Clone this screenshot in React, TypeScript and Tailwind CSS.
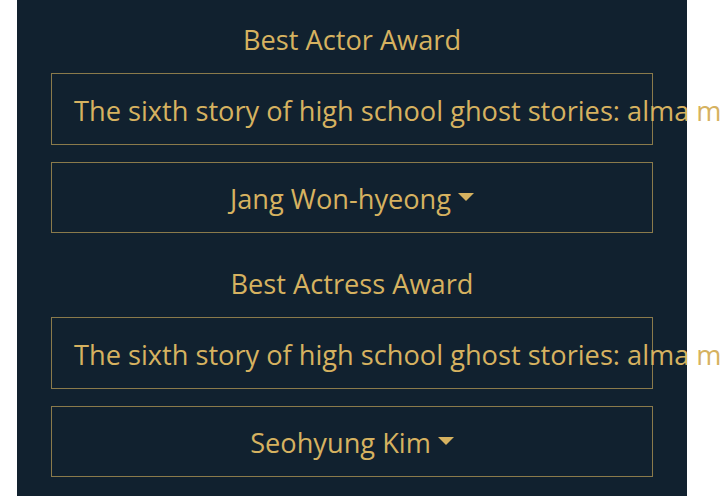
import React from 'react';

type Award = {
  title: string;
  film: string;
  nominee: string;
};

const awards: Award[] = [
  {
    title: 'Best Actor Award',
    film: 'The sixth story of high school ghost stories: alma mater',
    nominee: 'Jang Won-hyeong',
  },
  {
    title: 'Best Actress Award',
    film: 'The sixth story of high school ghost stories: alma mater',
    nominee: 'Seohyung Kim',
  },
];

function AwardBlock({ award, first }: { award: Award; first: boolean }) {
  return (
    <section className={first ? '' : 'mt-[33px]'}>
      <h2 className="text-center text-[27.2px] leading-[36px] font-normal mb-[15px]">{award.title}</h2>
      <div className="border border-[#8a7a4b] h-[72px] flex items-center pl-[22px] pt-[4px] whitespace-nowrap">
        {award.film}
      </div>
      <button className="mt-[17px] w-full border border-[#8a7a4b] h-[71px] pt-[4px] flex items-center justify-center">
        <span>{award.nominee}</span>
        {/* caret */}
        <span className="ml-[7px] mb-[6px] w-0 h-0 border-t-[8px] border-t-[#d6b260] border-x-[8px] border-x-transparent" />
      </button>
    </section>
  );
}

export default function App() {
  return (
    <div className="w-[720px] h-[496px] overflow-hidden bg-white">
      <div
        className="ml-[17px] w-[670px] h-[496px] bg-[#11212f] text-[#d6b260] text-[27.2px] px-[34px] pt-[22px]"
        style={{ fontFamily: '"Open Sans", sans-serif' }}
      >
        {awards.map((a, i) => (
          <AwardBlock key={a.title} award={a} first={i === 0} />
        ))}
      </div>
    </div>
  );
}
